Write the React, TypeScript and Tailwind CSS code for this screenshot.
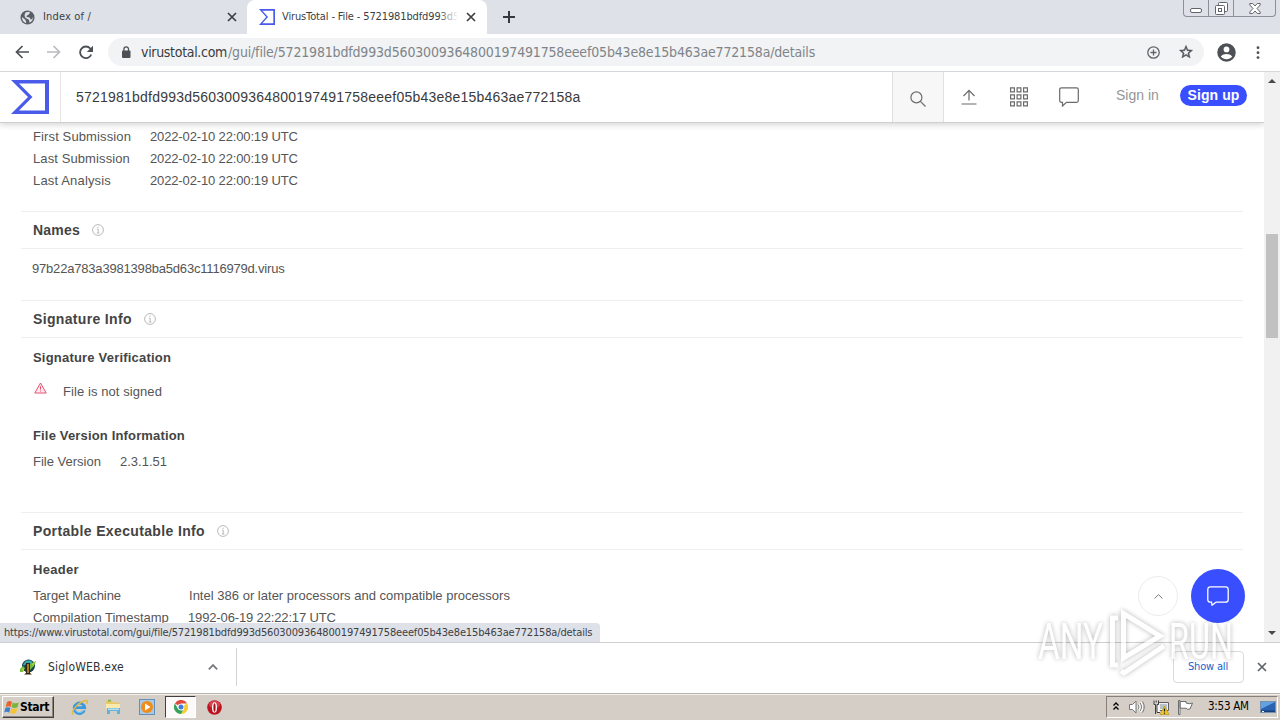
import type { ReactNode } from "react";

const HASH = "5721981bdfd993d5603009364800197491758eeef05b43e8e15b463ae772158a";

function Sigma({ className }: { className: string }) {
  return (
    <svg className={className} viewBox="0 0 38 34" preserveAspectRatio="none">
      <path fillRule="evenodd" fill="#4a5bea" d="M0 0H38V34H0L17 17ZM8 3.5L21.5 17L8 30.5H34V3.5Z" />
    </svg>
  );
}

function Cross({ className }: { className: string }) {
  return (
    <svg className={className} viewBox="0 0 10 10" fill="none" stroke="currentColor" strokeWidth="1.7">
      <path d="M1 1L9 9M9 1L1 9" />
    </svg>
  );
}

function Info() {
  return (
    <svg className="h-3 w-3 shrink-0" viewBox="0 0 12 12" fill="none" stroke="#b9b9b9" strokeWidth="1">
      <circle cx="6" cy="6" r="5.4" />
      <path d="M6 2.7v1.3M4.9 5.2H6.2V9M4.8 9h2.6" />
    </svg>
  );
}

function TabBar() {
  return (
    <div className="flex h-[34px] shrink-0 bg-[#dee1e8] font-['DejaVu_Sans_Condensed',sans-serif] text-[11px] text-[#3c4043]">
      <div className="flex w-[247px] items-center rounded-br-lg pr-[10px] pl-5">
        <svg className="h-[15px] w-[15px]" viewBox="0 0 16 16">
          <circle cx="8" cy="8" r="7.5" fill="#5a5e63" />
          <path fill="#dee1e8" d="M2 7.5L5.5 10.2L6.5 12.2V14C3.800 13.300 2 10.800 2 7.500ZM6.200 2.500L10.500 1.800L10 4L8.200 5.500L7 6L6.800 7.300L10.200 8L11.500 10.200L13 9.500L14.200 7C14 10.500 12.500 12.500 10.300 13.700L9.500 10.500L6 8.500L4.800 6.500L5.200 4Z" />
        </svg>
        <span className="mt-px ml-2 grow tracking-[0.15px]">Index of /</span>
        <Cross className="h-[10px] w-[10px]" />
      </div>
      <div className="flex w-[240px] items-center rounded-t-lg bg-white pr-[11px] pl-3">
        <Sigma className="h-4 w-4" />
        <span className="relative mt-px ml-[7px] w-[176px] overflow-hidden tracking-[-0.13px] whitespace-nowrap">
          VirusTotal - File - 5721981bdfd993d5
          <span className="absolute inset-y-0 right-0 w-5 bg-linear-to-r from-transparent to-white" />
        </span>
        <span className="grow" />
        <Cross className="h-[10px] w-[10px]" />
      </div>
      <div className="flex items-center pl-4">
        <svg className="h-3 w-3" viewBox="0 0 12 12" stroke="#35383c" strokeWidth="2">
          <path d="M6 0V12M0 6H12" />
        </svg>
      </div>
      <div className="mr-[4px] ml-auto flex h-[17px] w-[93px] rounded-b-[4px] border border-t-0 border-[#8b8f98]">
        <div className="flex w-[25px] items-end justify-center border-r border-[#8b8f98] pb-[3px]">
          <svg className="h-[5px] w-3" viewBox="0 0 12 5"><rect x=".5" y=".5" width="11" height="4" rx="1.500" fill="#fff" stroke="#60646c" /></svg>
        </div>
        <div className="flex w-[25px] items-center justify-center border-r border-[#8b8f98]">
          <svg className="h-[13px] w-[13px]" viewBox="0 0 13 13" fill="#fff" stroke="#60646c">
            <rect x="3.500" y=".5" width="9" height="9" rx="1" />
            <rect x=".5" y="3.500" width="9" height="9" rx="1" />
            <rect x="3.500" y="6.500" width="3" height="3" />
          </svg>
        </div>
        <div className="flex grow items-center justify-center">
          <svg className="h-[11px] w-3" viewBox="0 0 12 11" fill="#fff" stroke="#60646c">
            <path d="M.8.5H3.700L6 3L8.300.5H11.200V2L8 5.500L11.200 9V10.500H8.300L6 8L3.700 10.500H.8V9L4 5.500L.8 2Z" />
          </svg>
        </div>
      </div>
    </div>
  );
}

function Toolbar() {
  return (
    <div className="flex h-[38px] shrink-0 items-center border-b border-[#d5d7db] bg-white pb-px pl-[15px] text-[#5f6368]">
      <svg className="h-[14px] w-[14px]" viewBox="0 0 14 14" fill="none" stroke="#4d5156" strokeWidth="1.700"><path d="M14 7H1.500M7.500 1L1.500 7L7.500 13" /></svg>
      <svg className="ml-[18px] h-[14px] w-[14px]" viewBox="0 0 14 14" fill="none" stroke="#b9bbbe" strokeWidth="1.700"><path d="M0 7H12.500M6.500 1L12.500 7L6.500 13" /></svg>
      <svg className="ml-[18px] h-[15px] w-[14px]" viewBox="0 0 14 15" fill="none" stroke="#4d5156" strokeWidth="1.800">
        <path d="M12.300 9.500A5.800 5.800 0 1 1 11.300 3.500L12.500 5" />
        <path fill="#4d5156" stroke="none" d="M14 .8V7H7.800Z" />
      </svg>
      <div className="ml-[15px] flex h-7 w-[1096px] items-center rounded-full bg-[#f1f3f4] pl-[13px] font-['DejaVu_Sans_Condensed',sans-serif] text-[14px]">
        <svg className="h-3 w-[10px]" viewBox="0 0 10 12">
          <rect x="1" y="4.500" width="8.500" height="7.500" rx="1" fill="#4d5156" />
          <path d="M2.900 5V3.200a2.300 2.300 0 0 1 4.600 0V5" fill="none" stroke="#4d5156" strokeWidth="1.300" />
        </svg>
        <span className="ml-[10px] w-[87px] tracking-[-0.31px] whitespace-nowrap text-[#3a3c3f]">virustotal.com</span>
        <span className="grow tracking-[-0.17px] whitespace-nowrap text-[#808489]">/gui/file/{HASH}/details</span>
        <svg className="h-[13px] w-[13px]" viewBox="0 0 13 13" fill="none" stroke="#5f6368" strokeWidth="1.300"><circle cx="6.500" cy="6.500" r="5.700" /><path d="M6.500 3.500v6M3.500 6.500h6" /></svg>
        <svg className="mr-[10px] ml-[18px] h-4 w-4" viewBox="0 0 24 24" fill="#4d5156"><path d="M22 9.240l-7.190-.62L12 2 9.190 8.630 2 9.240l5.460 4.730L5.820 21 12 17.270 18.180 21l-1.630-7.030zM12 15.400l-3.760 2.270 1-4.280-3.320-2.880 4.380-.38L12 6.100l1.710 4.040 4.380.38-3.320 2.880 1 4.280z" stroke="#4d5156" strokeWidth=".6" /></svg>
      </div>
      <svg className="ml-[13px] h-[19px] w-[19px]" viewBox="0 0 20 20">
        <circle cx="10" cy="10" r="9.700" fill="#4d5156" />
        <circle cx="10" cy="6.800" r="3" fill="#fff" />
        <path fill="#fff" d="M4 14.200C5 12.300 8 11.500 10 11.500S15 12.300 16 14.200C14.500 16.300 12.300 17 10 17S5.500 16.300 4 14.200Z" />
      </svg>
      <svg className="ml-[20px] h-[13px] w-1" viewBox="0 0 4 13" fill="#4d5156"><circle cx="2" cy="1.700" r="1.400" /><circle cx="2" cy="6.700" r="1.400" /><circle cx="2" cy="11.600" r="1.400" /></svg>
    </div>
  );
}

function SiteHeader() {
  return (
    <header className="relative z-10 flex h-[51px] shrink-0 border-b border-[#cfcfcf] bg-white shadow-[0_2px_6px_rgba(0,0,0,0.16)]">
      <div className="flex w-[61px] items-center border-r border-[#e6e6e6] pl-[11px]">
        <Sigma className="h-[34px] w-[38px]" />
      </div>
      <div className="flex w-[831px] items-center pl-[15px] text-[14px] tracking-[0.220px] text-[#3a3a3a]">{HASH}</div>
      <div className="flex w-[52px] items-center justify-center border-x border-[#e0e0e0] bg-[#f7f7f7] pt-1">
        <svg className="h-4 w-4" viewBox="0 0 16 16" fill="none" stroke="#6b6b6b" strokeWidth="1.200"><circle cx="6.400" cy="6.400" r="5.500" /><path d="M10.400 10.400L15.500 15.500" /></svg>
      </div>
      <svg className="mt-[17px] ml-[17px] h-4 w-4" viewBox="0 0 16 16" fill="none" stroke="#6b6b6b" strokeWidth="1.200"><path d="M8 11.500V1.500M2.500 7L8 1.300L13.500 7M.5 15H15.500" /></svg>
      <svg className="mt-[15px] ml-[33px] h-5 w-[18px]" viewBox="0 0 18 20" fill="none" stroke="#6b6b6b" strokeWidth="1.200">
        <path d="M.6.8h3.800v4h-3.800ZM7.100.8h3.800v4h-3.800ZM13.600.8h3.800v4h-3.800ZM.6 7.800h3.800v4h-3.800ZM7.100 7.800h3.800v4h-3.800ZM13.600 7.800h3.800v4h-3.800ZM.6 14.800h3.800v4h-3.800ZM7.100 14.800h3.800v4h-3.800ZM13.600 14.800h3.800v4h-3.800Z" />
      </svg>
      <svg className="mt-[15px] ml-[31px] h-5 w-5" viewBox="0 0 20 20" fill="none" stroke="#6b6b6b" strokeWidth="1.200"><path d="M2.500.8H17.500Q19.300.8 19.300 2.500V13.500Q19.300 15.300 17.500 15.300H7.500L3.500 19V15.300H2.500Q.7 15.300.7 13.500V2.500Q.7.8 2.500.8Z" /></svg>
      <span className="mt-[13px] ml-[37px] w-[43px] text-[14px] whitespace-nowrap text-[#969696]">Sign in</span>
      <span className="mt-[13px] ml-[21px] flex h-[21px] w-[67px] items-center justify-center rounded-full bg-[#394eff] text-[14px] font-bold tracking-[0.100px] whitespace-nowrap text-white">Sign up</span>
    </header>
  );
}

function Row({ label, value, className }: { label: ReactNode; value: string; className: string }) {
  return (
    <div className="flex h-[22px] items-center whitespace-nowrap">
      <span className={className}>{label}</span>
      <span className={value.endsWith("UTC") ? "tracking-[-0.140px]" : "tracking-[0.015px]"}>{value}</span>
    </div>
  );
}

function SectionHead({ title, className }: { title: string; className: string }) {
  return (
    <div className="flex h-[38px] items-center border-y border-[#efefef] pl-3 text-[14px] font-bold text-[#444]">
      <span className={className}>{title}</span>
      <Info />
    </div>
  );
}

function Details() {
  return (
    <main className="h-[519px] w-[1222px] pt-[3px] text-[13px] text-[#555]">
      <div className="h-[85px] pl-3">
        <Row className="w-[117px] tracking-[0.120px]" label="First Submission" value="2022-02-10 22:00:19 UTC" />
        <Row className="w-[117px] tracking-[0.100px]" label="Last Submission" value="2022-02-10 22:00:19 UTC" />
        <Row className="w-[117px] tracking-[0.160px]" label="Last Analysis" value="2022-02-10 22:00:19 UTC" />
      </div>
      <SectionHead title="Names" className="mr-3 tracking-[0.200px]" />
      <div className="h-[51px] pt-[10px] pl-[11px] tracking-[-0.190px]">97b22a783a3981398ba5d63c1116979d.virus</div>
      <SectionHead title="Signature Info" className="mr-3 tracking-[0.340px]" />
      <div className="h-[174px] pt-[9px] pl-3">
        <div className="flex h-[22px] items-center font-bold tracking-[0.200px] text-[#444]">Signature Verification</div>
        <div className="mt-[12px] flex h-[22px] items-center">
          <svg className="-mt-[8px] ml-px h-3 w-[13px]" viewBox="0 0 13 12" fill="#fdeaf0" stroke="#e8506f"><path d="M6.500 1L12.200 11H.8ZM6.500 4.200V7.500M6.500 8.500V9.500" /></svg>
          <span className="ml-4 tracking-[0.080px]">File is not signed</span>
        </div>
        <div className="mt-[22px] flex h-[22px] items-center font-bold tracking-[0.160px] text-[#444]">File Version Information</div>
        <div className="mt-1">
          <Row className="w-[87px]" label="File Version" value="2.3.1.51" />
        </div>
      </div>
      <SectionHead title="Portable Executable Info" className="mr-3 tracking-[0.360px]" />
      <div className="pt-[9px] pl-3">
        <div className="mb-1 flex h-[22px] items-center font-bold tracking-[0.320px] text-[#444]">Header</div>
        <Row className="w-[156px] tracking-[-0.060px]" label="Target Machine" value="Intel 386 or later processors and compatible processors" />
        <Row className="w-[155px]" label="Compilation Timestamp" value="1992-06-19 22:22:17 UTC" />
      </div>
    </main>
  );
}

function Downloads() {
  return (
    <div className="flex h-[51px] shrink-0 items-center border-t border-[#cfcfd2] bg-white pb-[2px] pl-5 font-['DejaVu_Sans_Condensed',sans-serif]">
      <svg className="h-4 w-4" viewBox="0 0 16 16">
        <circle cx="8.500" cy="7" r="6.500" fill="#163f48" />
        <path fill="#37a7b5" d="M6 1.500h5l2 3-3 2V4H7l-3 3-1-1.500z" />
        <path fill="#72bd3c" d="M0 10l3-3 2 2-2 4H0zM10 5l6-3-2 5-4 4z" />
        <path fill="#c7d32c" d="M1 11l3-2v3zM12 5l3-2-2 4z" />
        <path fill="#37260e" d="M6 4h4v10l2 1.500H4L6 14z" />
        <path fill="#ad7b27" d="M7 5h2v9H7z" />
      </svg>
      <span className="ml-3 w-[76px] text-[12px] tracking-[0.180px] whitespace-nowrap text-[#303236]">SigloWEB.exe</span>
      <svg className="ml-[84px] h-[6px] w-[10px]" viewBox="0 0 10 6" fill="none" stroke="#777a7e" strokeWidth="1.800"><path d="M.8 5.300L5 1.100L9.200 5.300" /></svg>
      <div className="ml-[18px] h-[38px] w-px bg-[#d4d4d6]" />
      <div className="mr-[13px] ml-auto flex h-8 w-[71px] items-center justify-center rounded border border-[#d8dade] pr-px text-[11px] tracking-[-0.180px] text-[#1a62c6]">Show all</div>
      <Cross className="mr-[13px] h-[10px] w-[10px] text-[#5f6368]" />
    </div>
  );
}

function Taskbar() {
  return (
    <div className="flex h-[27px] shrink-0 items-center border-t border-[#b9b5ad] bg-[#d5cec6] font-['DejaVu_Sans_Condensed',sans-serif] text-[12px] text-black shadow-[inset_0_1px_0_#f3f1ed]">
      <div className="ml-[2px] flex h-[22px] w-[52px] items-center border border-t-white border-r-[#404040] border-b-[#404040] border-l-white bg-[#d5cec6] pl-px shadow-[inset_-1px_-1px_0_#8a867f]">
        <svg className="h-[15px] w-4" viewBox="0 0 16 15">
          <path fill="#e8642c" d="M3 2q3-2 5 0L6.700 7Q4.500 5.500 1.700 7Z" />
          <path fill="#79b43c" d="M8.800 2.400q3 1.800 6 .1L13.500 7.200Q10.500 8.600 7.500 7.200Z" />
          <path fill="#3f7fd0" d="M1.500 7.800Q4 6.500 6.400 8L5.200 12.700Q3 11 .2 12.400Z" />
          <path fill="#f6c431" d="M7.300 8.200q3 1.500 6 0L12 12.900Q9 14.500 6 12.900Z" />
        </svg>
        <span className="text-[12px] font-bold tracking-[-0.340px]">Start</span>
      </div>
      <svg className="ml-[17px] h-[17px] w-[17px]" viewBox="0 0 17 17" fill="none">
        <path d="M13.400 11.200A5.300 5.300 0 1 1 13.700 8.700H4" stroke="#3b9ade" strokeWidth="2.800" />
        <path d="M13 11A5 5 0 0 1 4 10.500" stroke="#7cc9f2" strokeWidth="1" />
        <path d="M2 15.500C-1 13 8 2 15.500 1.500C17 1.800 16.500 3.500 15.500 5" stroke="#e5b93c" strokeWidth="1.300" />
      </svg>
      <svg className="ml-[17px] h-4 w-[17px]" viewBox="0 0 17 16">
        <path fill="#e9c867" d="M1 2h6l1 1.500h7V10H1z" /><path fill="#f9e9ac" d="M1 5h14v5H1z" /><path fill="#7fb64b" d="M3 .8h3v1.700H3z" />
        <path fill="#5fb3dc" d="M2 9h13v6h-3v-3H5v3H2z" /><path fill="#b4e0f2" d="M3 9.500h11v1.500H3z" />
      </svg>
      <svg className="ml-[17px] h-4 w-4" viewBox="0 0 16 16">
        <rect x=".5" y=".5" width="15" height="15" fill="#aac9e3" stroke="#5f91bb" /><circle cx="8" cy="8" r="6" fill="#f08c1b" /><path fill="#fff" d="M6 4.500L11.500 8L6 11.500Z" />
      </svg>
      <div className="ml-[10px] flex h-[22px] w-[31px] items-center justify-center border border-t-[#404040] border-r-white border-b-white border-l-[#404040] bg-[#fbfaf9]">
        <svg className="h-[14px] w-[14px]" viewBox="0 0 14 14">
          <path fill="#df4a3c" d="M7 7L.9 3.500A7 7 0 0 1 13.100 3.500H7Z" />
          <path fill="#f7cd32" d="M7 7L13.100 3.500A7 7 0 0 1 7 14L10 8.700Z" />
          <path fill="#38a158" d="M7 14A7 7 0 0 1 .9 3.500L4 8.800L7 10.500L9 10.200Z" />
          <circle cx="7" cy="7" r="3.300" fill="#fff" /><circle cx="7" cy="7" r="2.500" fill="#3c7ee0" />
        </svg>
      </div>
      <svg className="ml-[11px] h-[15px] w-[15px]" viewBox="0 0 15 15"><circle cx="7.500" cy="7.500" r="7.300" fill="#bd1420" /><ellipse cx="7.500" cy="4.500" rx="5.500" ry="3.800" fill="#e3616a" opacity=".6" /><ellipse cx="7.500" cy="7.500" rx="2.500" ry="5.200" fill="#fff" /><ellipse cx="7.500" cy="7.500" rx="1.100" ry="4.200" fill="#a50f19" /></svg>
      <div className="mr-[2px] ml-auto flex h-[22px] w-[172px] items-center border border-t-[#85817a] border-r-white border-b-white border-l-[#85817a] pl-[6px]">
        <svg className="-mt-[3px] h-2 w-[6px]" viewBox="0 0 6 8" fill="none" stroke="#000" strokeWidth="1.300"><path d="M.5 3.500L3 1L5.500 3.500M.5 7.500L3 5L5.500 7.500" /></svg>
        <svg className="ml-[10px] h-[14px] w-4" viewBox="0 0 16 14" fill="none" stroke="#77777a"><path fill="#fff" d="M.5 4.500h3L7 1v12L3.500 9.500h-3z" /><path stroke="#fff" strokeWidth="2.600" d="M9 4.500q2 2.500 0 5M11.300 2.500q3.500 4.500 0 9" /><path d="M9 4.500q2 2.500 0 5M11.300 3q3 4 0 8M13.500 1.500q3.500 5.500 0 11" /></svg>
        <svg className="ml-2 h-[15px] w-[17px]" viewBox="0 0 17 15">
          <path fill="#eee" stroke="#5e6064" d="M5.500 2.500h10v8h-10z" /><path fill="#b8c2c8" d="M7 4h7v5H7z" />
          <path fill="#fff" stroke="#3d3f43" d="M1 .5v4h1.500V14M5.500.5v4H4v8h3M3.200.5v2" /><path fill="#f5cc25" stroke="#b18a10" strokeWidth=".6" d="M11.500 6L16 14.500H7z" /><path stroke="#222" strokeWidth="1.300" d="M11.500 8.500v3M11.500 12.500v1.200" />
        </svg>
        <svg className="ml-[7px] h-[15px] w-4" viewBox="0 0 16 15"><path fill="#fff" stroke="#6d6d70" d="M1.500.5h1.500v14H1.500zM3 1.500h6v1.500q3 1.500 6.500 0l-2.500 6q-3 1-4-.8H3z" /></svg>
        <span className="ml-[15px] w-[42px] text-[11.500px] tracking-[-0.250px] whitespace-nowrap">3:53 AM</span>
        <svg className="ml-[10px] h-3 w-4" viewBox="0 0 16 12"><rect x=".5" y=".5" width="15" height="11" fill="#2a62b2" stroke="#7790ad" /><path fill="#63a2e2" d="M1 1h14L1 8z" /><path fill="#173e77" d="M1 9.500h14V11H1z" /><path fill="#fff" d="M2 10h2v1H2z" /></svg>
      </div>
    </div>
  );
}

function Watermark() {
  return (
    <div className="pointer-events-none absolute top-[604px] left-[1038px] z-30 opacity-65 drop-shadow-[0_0_2.5px_rgba(0,0,0,0.45)]">
      <svg className="h-[76px] w-[196px]" viewBox="0 0 196 76">
        <g fill="#fff" fontFamily="Roboto, sans-serif" fontSize="50">
          <text x="0" y="55" textLength="65" lengthAdjust="spacingAndGlyphs">ANY</text>
          <text x="131" y="55" textLength="64" lengthAdjust="spacingAndGlyphs">RUN</text>
        </g>
        <g fill="none" stroke="#fff" strokeWidth="5">
          <path d="M85.500 9.500L122 32L85.500 54Z" />
          <path d="M80 14H74.500V61H80M83 67L86 69L126 42" />
        </g>
      </svg>
    </div>
  );
}

export default function App() {
  return (
    <div className="relative flex h-[720px] w-[1280px] flex-col overflow-hidden bg-white font-['Liberation_Sans',sans-serif] leading-normal">
      <TabBar />
      <Toolbar />
      <div className="relative flex h-[570px] shrink-0">
        <div className="flex w-[1264px] flex-col overflow-hidden">
          <SiteHeader />
          <div className="pl-[21px]">
            <Details />
          </div>
        </div>
        <div className="flex w-4 flex-col items-center bg-[#f1f1f1]">
          <svg className="mt-[7px] h-1 w-2" viewBox="0 0 8 4"><path fill="#4a4a4a" d="M0 4L4 0L8 4Z" /></svg>
          <div className="mt-[151px] h-[104px] w-3 bg-[#c1c1c1]" />
          <svg className="mt-auto mb-[7px] h-1 w-2" viewBox="0 0 8 4"><path fill="#4a4a4a" d="M0 0L4 4L8 0Z" /></svg>
        </div>
        <div className="absolute top-[504px] left-[1138px] flex h-10 w-10 items-center justify-center rounded-full border border-[#ececec] bg-white">
          <svg className="h-[5px] w-[9px]" viewBox="0 0 9 5" fill="none" stroke="#7a7a7a"><path d="M.5 4.500L4.500.7L8.500 4.500" /></svg>
        </div>
        <div className="absolute top-[497px] left-[1191px] flex h-[54px] w-[54px] items-center justify-center rounded-full bg-[#394eff]">
          <svg className="h-5 w-[22px]" viewBox="0 0 22 20" fill="none" stroke="#fff" strokeWidth="1.300"><path d="M3.500.8H18.500Q21.200.8 21.200 3.500V13.500Q21.200 16.200 18.500 16.200H9L5 19.200L4.500 16.200H3.500Q.8 16.200.8 13.500V3.500Q.8.8 3.500.8Z" /></svg>
        </div>
        <div className="absolute bottom-0 left-0 flex h-[19px] w-[600px] items-center rounded-tr bg-[#dee1e8] pt-px pl-1 font-['DejaVu_Sans_Condensed',sans-serif] text-[11px] tracking-[-0.155px] whitespace-nowrap text-[#3c4043]">
          https://www.virustotal.com/gui/file/{HASH}/details
        </div>
      </div>
      <Downloads />
      <Taskbar />
      <Watermark />
    </div>
  );
}
